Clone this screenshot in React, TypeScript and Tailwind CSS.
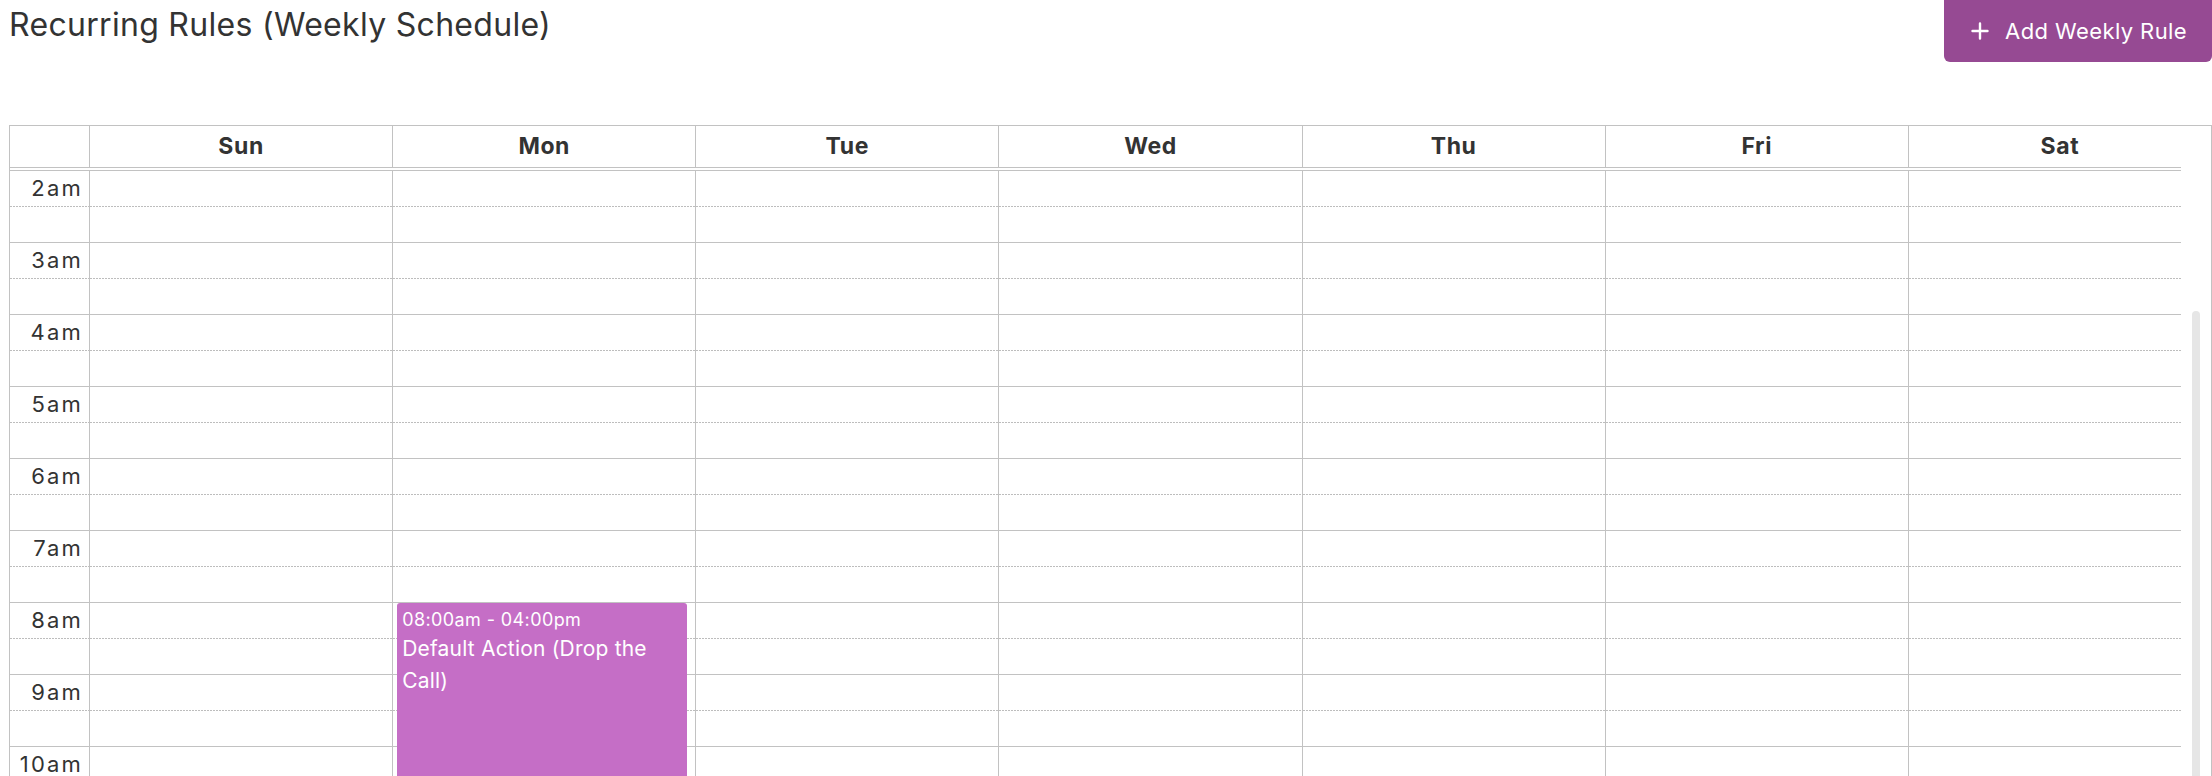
import React from "react";

const days = ["Sun", "Mon", "Tue", "Wed", "Thu", "Fri", "Sat"];
const hours = ["2am", "3am", "4am", "5am", "6am", "7am", "8am", "9am", "10am", "11am", "12pm"];
const slots = hours.flatMap((h) => [h, ""]);

const dotted = "h-px bg-[repeating-linear-gradient(to_right,#bdbdbd_0_2px,transparent_2px_3px)]";

function PlusIcon() {
  return (
    <svg width="18" height="18" viewBox="0 0 18 18" fill="none" stroke="currentColor" strokeWidth="2.4" strokeLinecap="round">
      <path d="M9 1.5v15M1.5 9h15" />
    </svg>
  );
}

function Slot({ half, children }: { half: boolean; children?: React.ReactNode }) {
  return (
    <div className="flex h-[36px] flex-col">
      <div className="flex-1">{children}</div>
      <div className={half ? dotted : "h-px bg-[#c2c2c2]"} />
    </div>
  );
}

export default function App() {
  return (
    <div className="h-[776px] overflow-hidden bg-white pl-[9px] font-['Inter','Noto_Sans',sans-serif] text-[#333333]">
      <div className="flex items-start justify-between">
        <h1 className="pt-[5px] text-[32px] font-normal leading-[40px] tracking-[0.3px]">
          Recurring Rules (Weekly Schedule)
        </h1>
        <button className="-mt-[8px] flex h-[70px] items-center gap-[16px] rounded-md bg-[#964a93] pl-[27px] pr-[25px] pt-[8px] text-[22px] text-white">
          <PlusIcon />
          <span className="tracking-[0.4px]">Add Weekly Rule</span>
        </button>
      </div>

      <div className="mt-[63px] border border-[#c2c2c2]">
        <div className="grid h-[41px] grid-cols-[79px_repeat(7,minmax(0,1fr))]">
          <div />
          {days.map((d) => (
            <div key={d} className="flex items-center justify-center border-l border-[#c2c2c2] text-[23px] font-bold tracking-[0.6px]">
              {d}
            </div>
          ))}
        </div>
        <div className="mr-[30px] h-[4px] border-y border-[#c2c2c2]" />

        <div className="grid grid-cols-[79px_repeat(7,minmax(0,1fr))]">
          <div>
            {slots.map((label, i) => (
              <Slot key={i} half={i % 2 === 0}>
                <div className="pr-[6px] pt-[2px] text-right text-[22px] leading-[30px] tracking-[2.2px]">{label}</div>
              </Slot>
            ))}
          </div>
          {days.map((d, i) => (
            <div key={d} className="relative border-l border-[#c2c2c2]">
              <div className={i === 6 ? "mr-[30px]" : ""}>
                {slots.map((_, j) => (
                  <Slot key={j} half={j % 2 === 0} />
                ))}
              </div>
              {d === "Mon" && (
                <div className="absolute left-[4px] right-[8px] top-[432px] h-[575px] rounded-[3px] bg-[#c56ec6] px-[5px] pt-[4px] text-white">
                  <div className="text-[18px] leading-[26px] tracking-[0.4px]">08:00am - 04:00pm</div>
                  <div className="pr-[30px] text-[21px] leading-[32px] tracking-[0.2px]">Default Action (Drop the Call)</div>
                </div>
              )}
              {i === 6 && (
                <div className="absolute right-[11px] top-[140px] h-[600px] w-[8px] rounded-t-[4px] bg-[#e6e6e6]" />
              )}
            </div>
          ))}
        </div>
      </div>
    </div>
  );
}
